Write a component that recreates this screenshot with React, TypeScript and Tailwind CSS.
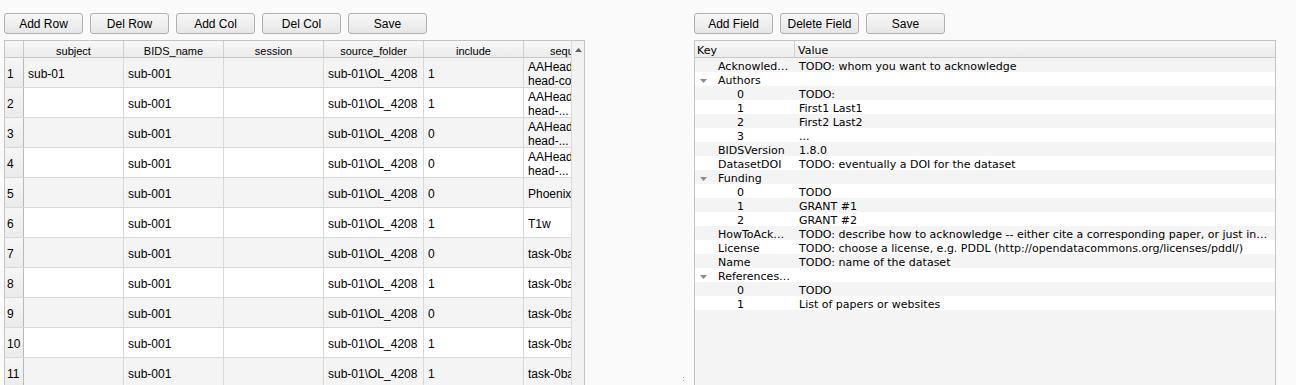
import React from "react";

const tableRows: { sub: string; bids: string; ses: string; src: string; inc: string; seq: string[] }[] = [
  { sub: "sub-01", bids: "sub-001", ses: "", src: "sub-01\\OL_4208", inc: "1", seq: ["AAHead_Scout_32ch", "head-coil"] },
  { sub: "", bids: "sub-001", ses: "", src: "sub-01\\OL_4208", inc: "1", seq: ["AAHead", "head-..."] },
  { sub: "", bids: "sub-001", ses: "", src: "sub-01\\OL_4208", inc: "0", seq: ["AAHead", "head-..."] },
  { sub: "", bids: "sub-001", ses: "", src: "sub-01\\OL_4208", inc: "0", seq: ["AAHead", "head-..."] },
  { sub: "", bids: "sub-001", ses: "", src: "sub-01\\OL_4208", inc: "0", seq: ["Phoenix_Zip"] },
  { sub: "", bids: "sub-001", ses: "", src: "sub-01\\OL_4208", inc: "1", seq: ["T1w"] },
  { sub: "", bids: "sub-001", ses: "", src: "sub-01\\OL_4208", inc: "0", seq: ["task-0back"] },
  { sub: "", bids: "sub-001", ses: "", src: "sub-01\\OL_4208", inc: "1", seq: ["task-0back"] },
  { sub: "", bids: "sub-001", ses: "", src: "sub-01\\OL_4208", inc: "0", seq: ["task-0back"] },
  { sub: "", bids: "sub-001", ses: "", src: "sub-01\\OL_4208", inc: "1", seq: ["task-0back"] },
  { sub: "", bids: "sub-001", ses: "", src: "sub-01\\OL_4208", inc: "1", seq: ["task-0back"] },
];

const treeRows: { k: string; v: string; lvl: number; arrow?: boolean }[] = [
  { k: "Acknowled\u2026", v: "TODO: whom you want to acknowledge", lvl: 0 },
  { k: "Authors", v: "", lvl: 0, arrow: true },
  { k: "0", v: "TODO:", lvl: 1 },
  { k: "1", v: "First1 Last1", lvl: 1 },
  { k: "2", v: "First2 Last2", lvl: 1 },
  { k: "3", v: "...", lvl: 1 },
  { k: "BIDSVersion", v: "1.8.0", lvl: 0 },
  { k: "DatasetDOI", v: "TODO: eventually a DOI for the dataset", lvl: 0 },
  { k: "Funding", v: "", lvl: 0, arrow: true },
  { k: "0", v: "TODO", lvl: 1 },
  { k: "1", v: "GRANT #1", lvl: 1 },
  { k: "2", v: "GRANT #2", lvl: 1 },
  { k: "HowToAck\u2026", v: "TODO: describe how to acknowledge -- either cite a corresponding paper, or just in\u2026", lvl: 0 },
  { k: "License", v: "TODO: choose a license, e.g. PDDL (http://opendatacommons.org/licenses/pddl/)", lvl: 0 },
  { k: "Name", v: "TODO: name of the dataset", lvl: 0 },
  { k: "References\u2026", v: "", lvl: 0, arrow: true },
  { k: "0", v: "TODO", lvl: 1 },
  { k: "1", v: "List of papers or websites", lvl: 1 },
];

function Btn({ label }: { label: string }) {
  return (
    <button className="w-[79px] h-[21px] shrink-0 rounded-[3px] border border-[#b0b0b0] bg-linear-to-b from-[#f7f7f7] to-[#e7e7e7] text-[12px] leading-none text-black font-['Liberation_Sans',sans-serif]">
      {label}
    </button>
  );
}

const headCols = ["subject", "BIDS_name", "session", "source_folder", "include"];

export default function App() {
  return (
    <div className="w-[1296px] h-[385px] bg-[#fafafa] flex overflow-hidden text-black font-['Liberation_Sans',sans-serif]">
      {/* Left panel */}
      <div className="w-[585px] h-full shrink-0 flex flex-col pt-[13px] pl-[4px]">
        <div className="flex gap-[7px]">
          <Btn label="Add Row" />
          <Btn label="Del Row" />
          <Btn label="Add Col" />
          <Btn label="Del Col" />
          <Btn label="Save" />
        </div>
        <div className="mt-[6px] flex-1 min-h-0 flex border border-b-0 border-[#c4c4c4] bg-white overflow-hidden">
          <div className="w-[566px] flex flex-col overflow-hidden">
            <div className="h-[17px] shrink-0 flex border-b border-[#c8c8c8] bg-linear-to-b from-[#f8f8f8] to-[#ebebeb] text-[11px] leading-[12px]">
              <div className="w-[19px] shrink-0 border-r border-[#c8c8c8]" />
              {headCols.map((h) => (
                <div key={h} className="w-[100px] shrink-0 border-r border-[#d0d0d0] text-center pt-[4px]">
                  {h}
                </div>
              ))}
              <div className="w-[47px] shrink-0 overflow-hidden whitespace-nowrap pt-[4px] pl-[26px]">sequence</div>
            </div>
            {tableRows.map((r, i) => (
              <div
                key={i}
                className={`h-[30px] shrink-0 flex border-b border-[#d8d8d8] text-[12px] ${i % 2 === 0 ? "bg-[#f4f4f4]" : "bg-white"}`}
              >
                <div className="w-[19px] shrink-0 border-r border-[#b8b8b8] bg-linear-to-b from-[#f6f6f6] to-[#ebebeb] flex items-center pl-[2px] pt-[3px]">
                  {i + 1}
                </div>
                {[r.sub, r.bids, r.ses, r.src, r.inc].map((c, j) => (
                  <div key={j} className="w-[100px] shrink-0 border-r border-[#d8d8d8] flex items-center pl-[4px] pt-[3px] overflow-hidden whitespace-nowrap">
                    {c}
                  </div>
                ))}
                <div className="w-[47px] shrink-0 flex flex-col justify-center pl-[4px] pt-[2px] overflow-hidden whitespace-nowrap leading-[14px]">
                  {r.seq.map((s, k) => (
                    <div key={k}>{s}</div>
                  ))}
                </div>
              </div>
            ))}
          </div>
          <div className="w-[13px] shrink-0 flex flex-col bg-[#f2f2f2] border-l border-[#dadada]">
            <div className="h-[16px] flex items-center justify-center pt-[2px]">
              <svg width="7" height="4" viewBox="0 0 7 4">
                <polygon points="3.5,0 7,4 0,4" fill="#606060" />
              </svg>
            </div>
          </div>
        </div>
      </div>

      {/* gap with splitter handle */}
      <div className="w-[109px] shrink-0 h-full flex flex-col justify-end pb-[4px] pl-[98px] gap-[2px]">
        <div className="w-[1px] h-[1px] bg-[#9a9a9a]" />
        <div className="w-[1px] h-[1px] bg-[#9a9a9a]" />
      </div>

      {/* Right panel */}
      <div className="w-[582px] h-full shrink-0 flex flex-col pt-[13px]">
        <div className="flex gap-[7px]">
          <Btn label="Add Field" />
          <Btn label="Delete Field" />
          <Btn label="Save" />
        </div>
        <div className="mt-[6px] flex-1 min-h-0 flex flex-col border border-b-0 border-[#c4c4c4] bg-[#f4f4f4] overflow-hidden font-['DejaVu_Sans',sans-serif] text-[11px]">
          <div className="h-[17px] shrink-0 flex border-b border-[#c8c8c8] bg-linear-to-b from-[#f8f8f8] to-[#ebebeb] leading-[12px]">
            <div className="w-[100px] shrink-0 border-r border-[#d0d0d0] pl-[2px] pt-[4px]">Key</div>
            <div className="flex-1 pl-[3px] pt-[4px]">Value</div>
          </div>
          {treeRows.map((r, i) => (
            <div key={i} className={`h-[14px] shrink-0 flex leading-[14px] ${i % 2 === 0 ? "bg-[#f4f4f4]" : "bg-white"}`}>
              <div className={`w-[100px] shrink-0 flex whitespace-nowrap pt-[2px] ${r.lvl === 0 ? "pl-[5px]" : "pl-[42px]"}`}>
                {r.lvl === 0 && (
                  <div className="w-[18px] h-[14px] shrink-0 flex items-center">
                    {r.arrow && (
                      <svg width="7" height="4" viewBox="0 0 7 4">
                        <polygon points="0,0 7,0 3.5,4" fill="#8a8a8a" />
                      </svg>
                    )}
                  </div>
                )}
                <span>{r.k}</span>
              </div>
              <div className="flex-1 pl-[4px] pt-[2px] whitespace-nowrap">{r.v}</div>
            </div>
          ))}
        </div>
      </div>
    </div>
  );
}
